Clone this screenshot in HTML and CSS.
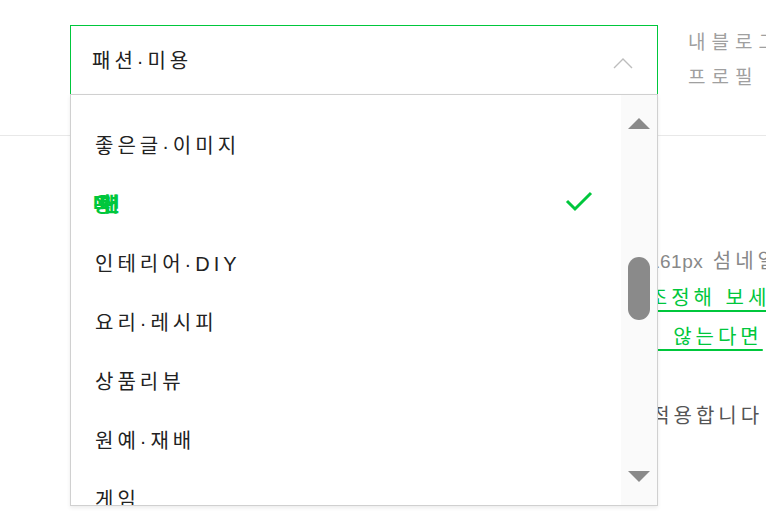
FILE: index.html
```html
<!DOCTYPE html>
<html lang="ko">
<head>
<meta charset="utf-8">
<title>블로그 주제 설정</title>
<link rel="stylesheet" href="styles.css">
</head>
<body>
<div class="page">
  <section class="row-top">
    <div class="select-wrap">
      <div class="select">
        <span class="select-value">패션·미용</span>
        <svg class="chevron" width="20" height="12" viewBox="0 0 20 12"><path d="M1 11 L10 2 L19 11" fill="none" stroke="#bdbdbd" stroke-width="1.4"/></svg>
      </div>
      <div class="dropdown">
        <ul class="options">
          <li class="option">좋은글·이미지</li>
          <li class="option selected"><span class="garbled">패션·미용</span>
            <svg class="check" width="28" height="22" viewBox="0 0 28 22"><path d="M2 11 L10 19 L26 3" fill="none" stroke="#00c73c" stroke-width="3"/></svg>
          </li>
          <li class="option">인테리어·DIY</li>
          <li class="option">요리·레시피</li>
          <li class="option">상품리뷰</li>
          <li class="option">원예·재배</li>
          <li class="option">게임</li>
        </ul>
        <div class="scrollbar">
          <span class="arrow up"></span>
          <div class="track"><span class="thumb"></span></div>
          <span class="arrow down"></span>
        </div>
      </div>
    </div>
    <div class="help">
      <p>내블로그 주제</p>
      <p>프로필 영역</p>
    </div>
  </section>
  <section class="row-bottom">
    <p class="line l1">대표이미지는 <span class="num">161px</span> 섬네일로 보여집니다</p>
    <p class="line l2"><a href="#">크기를 조정해 보세요</a></p>
    <p class="line l3"><a href="#">적용되지 않는다면</a></p>
    <p class="line l4">자동으로 적용합니다</p>
  </section>
</div>
</body>
</html>
```

FILE: styles.css
```css
* { box-sizing: border-box; }
html, body { margin: 0; padding: 0; background: #fff; }
body {
  width: 766px;
  height: 531px;
  overflow: hidden;
  font-family: "Liberation Sans", "Noto Sans CJK KR", sans-serif;
  color: #222;
}
p { margin: 0; }
.page { position: relative; }

.row-top {
  display: flex;
  align-items: flex-start;
  gap: 30px;
  height: 136px;
  padding: 25px 0 0 70px;
  border-bottom: 1px solid #e8e8e8;
}
.select-wrap {
  position: relative;
  width: 588px;
  flex: none;
  z-index: 2;
}
.select {
  display: flex;
  align-items: center;
  justify-content: space-between;
  height: 70px;
  padding: 0 24px 0 21px;
  border: 1px solid #00c73c;
  border-bottom: none;
  background: #fff;
}
.select-value {
  font-size: 20px;
  letter-spacing: 4px;
  color: #222;
  margin-top: -3px;
}
.chevron { display: block; margin-top: 5px; }

.dropdown {
  position: absolute;
  top: 69px;
  left: 0;
  width: 588px;
  height: 412px;
  display: flex;
  background: #fff;
  border: 1px solid #d0d0d0;
  box-shadow: 0 2px 4px rgba(0,0,0,0.08);
  overflow: hidden;
}
.options {
  list-style: none;
  margin: 0;
  padding: 20px 0 0 0;
  flex: 1;
}
.option {
  display: flex;
  align-items: center;
  justify-content: space-between;
  height: 59px;
  padding: 0 28px 0 24px;
  font-size: 20px;
  letter-spacing: 4px;
  color: #222;
  white-space: nowrap;
}
.garbled {
  font-weight: 700;
  color: #00c73c;
  letter-spacing: -17px;
  margin-left: 5px;
}
.check { display: block; margin-top: -6px; }

.scrollbar {
  flex: none;
  width: 36px;
  background: #fafafa;
  display: flex;
  flex-direction: column;
  align-items: center;
  padding: 23px 0 23px 0;
}
.arrow {
  width: 0;
  height: 0;
  border-left: 11px solid transparent;
  border-right: 11px solid transparent;
  flex: none;
}
.arrow.up { border-bottom: 11px solid #8a8a8a; }
.arrow.down { border-top: 11px solid #8a8a8a; }
.track {
  flex: 1;
  width: 22px;
  padding-top: 128px;
}
.thumb {
  display: block;
  width: 22px;
  height: 63px;
  border-radius: 11px;
  background: #8a8a8a;
}

.help {
  font-size: 19px;
  letter-spacing: 6px;
  line-height: 35px;
  color: #a0a0a0;
  white-space: nowrap;
  margin-top: 0;
}

.row-bottom {
  padding-top: 106px;
  font-size: 20px;
  letter-spacing: 4px;
  white-space: nowrap;
}
.line { height: 38px; line-height: 38px; }
.num { font-size: 19px; letter-spacing: 0.5px; }
.l1 { color: #888; margin-left: 505px; }
.l2 { margin-left: 572px; height: 36px; line-height: 36px; }
.l3 { margin-left: 574px; height: 42px; line-height: 42px; }
.l4 { color: #555; margin-left: 552px; margin-top: 39px; }
.line a { color: #00c73c; text-decoration: underline; text-underline-offset: 5px; }
```
